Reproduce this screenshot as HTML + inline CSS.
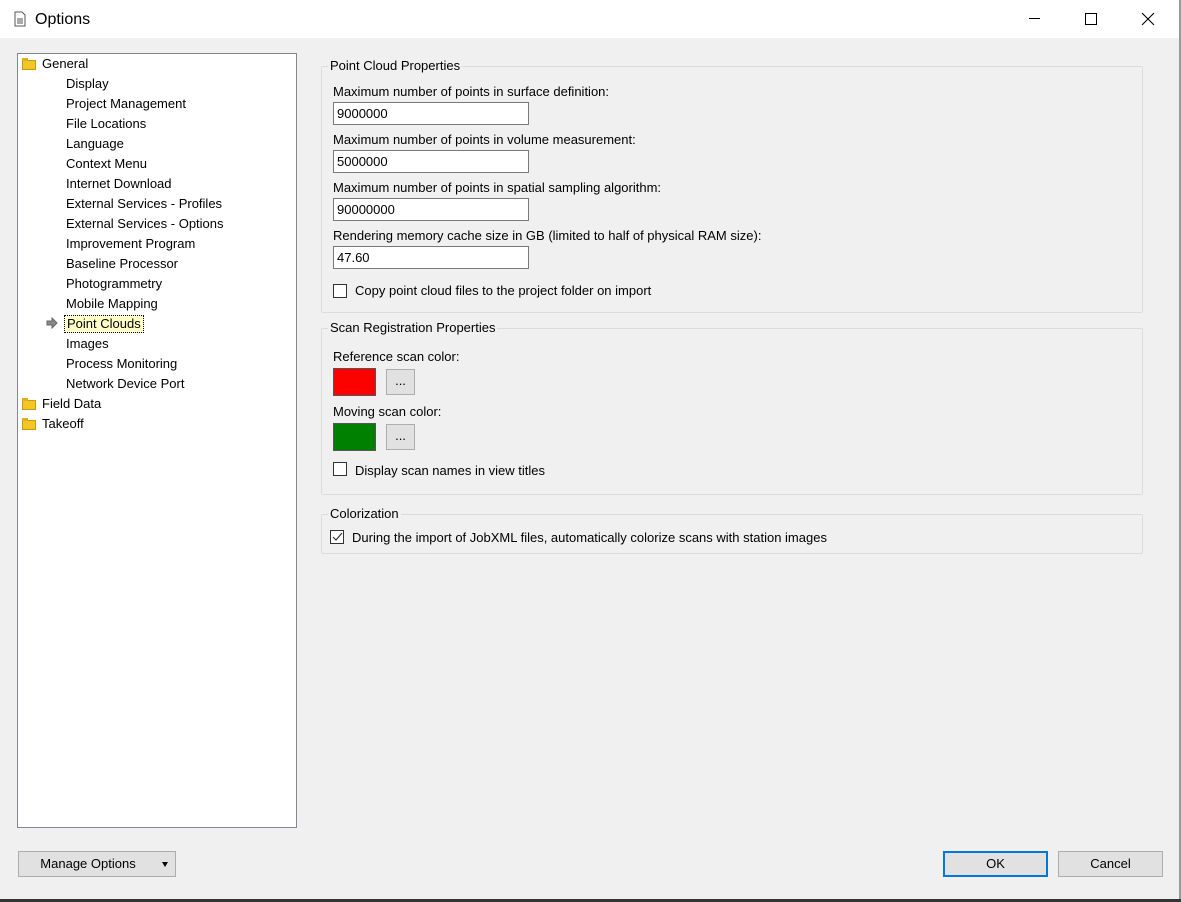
<!DOCTYPE html>
<html><head><style>
*{box-sizing:border-box;margin:0;padding:0}
body{width:1181px;height:902px;background:#f0f0f0;font-family:"Liberation Sans",Arial,sans-serif;font-size:13px;color:#000;position:relative;overflow:hidden}
.abs{position:absolute}
#title{left:0;top:0;width:1181px;height:38px;background:#fff}
#title .t{left:35px;top:11px;font-size:16px}
#tree{left:17px;top:53px;width:280px;height:775px;background:#fff;border:1px solid #828790}
.it{position:absolute;font-size:13px;white-space:nowrap;line-height:16px}
.fold{position:absolute;width:14px;height:10px;background:#f3c623;border:1px solid #c89a10}
.fold:before{content:"";position:absolute;left:-1px;top:-3px;width:6px;height:3px;background:#e0b01a}
.grp{position:absolute;border:1px solid #dcdcdc;border-radius:2px}
.gt{position:absolute;background:#f0f0f0;padding:0 2px;font-size:13px;line-height:14px}
.lbl{position:absolute;font-size:13px;white-space:nowrap}
.inp{position:absolute;width:196px;height:23px;background:#fff;border:1px solid #7a7a7a;padding:3px 3px;font-size:13px}
.cb{position:absolute;width:14px;height:14px;background:#fff;border:1px solid #333}
.btn{position:absolute;background:#e1e1e1;border:1px solid #adadad;text-align:center;font-size:13px}
</style></head><body>
<div id="title" class="abs">
 <svg class="abs" style="left:13px;top:11px" width="14" height="16" viewBox="0 0 14 16"><path d="M2 1h7l3 3v11H2z" fill="#fff" stroke="#555"/><path d="M4 8h6M4 10h6M4 12h6" stroke="#555"/></svg>
 <div class="abs t">Options</div>
 <div class="abs" style="left:1029px;top:18px;width:11px;height:1px;background:#000"></div>
 <div class="abs" style="left:1085px;top:13px;width:12px;height:12px;border:1px solid #000"></div>
 <svg class="abs" style="left:1141px;top:12px" width="14" height="14"><path d="M1 1L13 13M13 1L1 13" stroke="#000" stroke-width="1.1"/></svg>
</div>
<div id="tree" class="abs">
 <div class="fold" style="left:4px;top:6px"></div>
 <div class="it" style="left:24px;top:2px">General</div>
 <div class="it" style="left:48px;top:22px">Display</div>
 <div class="it" style="left:48px;top:42px">Project Management</div>
 <div class="it" style="left:48px;top:62px">File Locations</div>
 <div class="it" style="left:48px;top:82px">Language</div>
 <div class="it" style="left:48px;top:102px">Context Menu</div>
 <div class="it" style="left:48px;top:122px">Internet Download</div>
 <div class="it" style="left:48px;top:142px">External Services - Profiles</div>
 <div class="it" style="left:48px;top:162px">External Services - Options</div>
 <div class="it" style="left:48px;top:182px">Improvement Program</div>
 <div class="it" style="left:48px;top:202px">Baseline Processor</div>
 <div class="it" style="left:48px;top:222px">Photogrammetry</div>
 <div class="it" style="left:48px;top:242px">Mobile Mapping</div>
 <svg class="abs" style="left:28px;top:263px" width="12" height="12"><path d="M1 4h5V1l5 5-5 5V8H1z" fill="#888" stroke="#666"/></svg>
 <div class="it" style="left:46px;top:261px;padding:0 2px;background:#ffffc8;border:1px dotted #000;height:18px;line-height:16px">Point Clouds</div>
 <div class="it" style="left:48px;top:282px">Images</div>
 <div class="it" style="left:48px;top:302px">Process Monitoring</div>
 <div class="it" style="left:48px;top:322px">Network Device Port</div>
 <div class="fold" style="left:4px;top:346px"></div>
 <div class="it" style="left:24px;top:342px">Field Data</div>
 <div class="fold" style="left:4px;top:366px"></div>
 <div class="it" style="left:24px;top:362px">Takeoff</div>
</div>

<div class="grp" style="left:321px;top:66px;width:822px;height:247px"></div>
<div class="gt" style="left:328px;top:59px">Point Cloud Properties</div>
<div class="lbl" style="left:333px;top:84px">Maximum number of points in surface definition:</div>
<div class="inp" style="left:333px;top:102px">9000000</div>
<div class="lbl" style="left:333px;top:132px">Maximum number of points in volume measurement:</div>
<div class="inp" style="left:333px;top:150px">5000000</div>
<div class="lbl" style="left:333px;top:180px">Maximum number of points in spatial sampling algorithm:</div>
<div class="inp" style="left:333px;top:198px">90000000</div>
<div class="lbl" style="left:333px;top:228px">Rendering memory cache size in GB (limited to half of physical RAM size):</div>
<div class="inp" style="left:333px;top:246px">47.60</div>
<div class="cb" style="left:333px;top:284px"></div>
<div class="lbl" style="left:355px;top:283px">Copy point cloud files to the project folder on import</div>

<div class="grp" style="left:321px;top:328px;width:822px;height:167px"></div>
<div class="gt" style="left:328px;top:321px">Scan Registration Properties</div>
<div class="lbl" style="left:333px;top:349px">Reference scan color:</div>
<div class="abs" style="left:333px;top:368px;width:43px;height:28px;background:#f00;border:1px solid #555"></div>
<div class="btn" style="left:386px;top:369px;width:29px;height:26px;line-height:22px">...</div>
<div class="lbl" style="left:333px;top:404px">Moving scan color:</div>
<div class="abs" style="left:333px;top:423px;width:43px;height:28px;background:#008000;border:1px solid #555"></div>
<div class="btn" style="left:386px;top:424px;width:29px;height:26px;line-height:22px">...</div>
<div class="cb" style="left:333px;top:462px"></div>
<div class="lbl" style="left:355px;top:463px">Display scan names in view titles</div>

<div class="grp" style="left:321px;top:514px;width:822px;height:40px"></div>
<div class="gt" style="left:328px;top:507px">Colorization</div>
<div class="cb" style="left:330px;top:530px;border-color:#333"><svg width="12" height="12" style="position:absolute;left:0;top:0"><path d="M2 6l3 3 6-7" fill="none" stroke="#333" stroke-width="1.2"/></svg></div>
<div class="lbl" style="left:352px;top:530px">During the import of JobXML files, automatically colorize scans with station images</div>

<div class="btn" style="left:18px;top:851px;width:158px;height:26px;line-height:24px;padding-right:18px">Manage Options</div>
<div class="abs" style="left:162px;top:862px;width:0;height:0;border-left:3.5px solid transparent;border-right:3.5px solid transparent;border-top:5px solid #000"></div>
<div class="btn" style="left:943px;top:851px;width:105px;height:26px;line-height:22px;border:2px solid #0078d7">OK</div>
<div class="btn" style="left:1058px;top:851px;width:105px;height:26px;line-height:24px">Cancel</div>
<div class="abs" style="left:1179px;top:0;width:2px;height:902px;background:#9a9a9a"></div>
<div class="abs" style="left:0;top:899px;width:1181px;height:3px;background:#333"></div>
</body></html>
